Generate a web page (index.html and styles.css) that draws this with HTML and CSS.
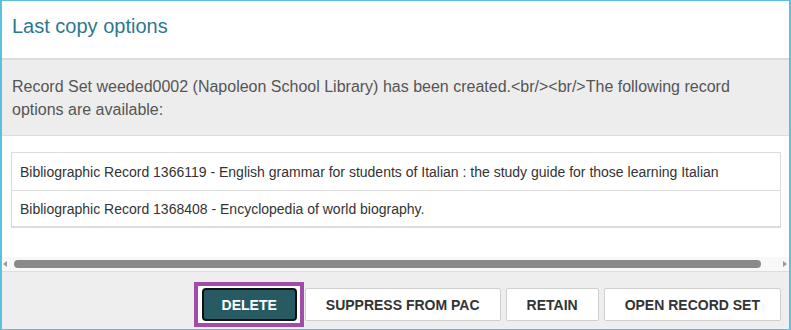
FILE: index.html
```html
<!DOCTYPE html>
<html>
<head>
<meta charset="utf-8">
<link rel="stylesheet" href="styles.css">
</head>
<body>
<div class="modal">
  <div class="modal-header">
    <h4 class="modal-title">Last copy options</h4>
  </div>
  <div class="modal-message">Record Set weeded0002 (Napoleon School Library) has been created.&lt;br/&gt;&lt;br/&gt;The following record options are available:</div>
  <div class="modal-body">
    <div class="record-list">
      <div class="record-row">Bibliographic Record 1366119 - English grammar for students of Italian : the study guide for those learning Italian</div>
      <div class="record-row">Bibliographic Record 1368408 - Encyclopedia of world biography.</div>
    </div>
  </div>
  <div class="hscroll">
    <span class="arrow arrow-left"></span>
    <div class="thumb"></div>
    <span class="arrow arrow-right"></span>
  </div>
  <div class="modal-footer">
    <span class="focus-ring"><button class="btn btn-primary">DELETE</button></span>
    <button class="btn">SUPPRESS FROM PAC</button>
    <button class="btn">RETAIN</button>
    <button class="btn">OPEN RECORD SET</button>
  </div>
</div>
</body>
</html>
```

FILE: styles.css
```css
* { box-sizing: border-box; }
html, body {
  margin: 0;
  padding: 0;
  background: #fff;
}
body {
  font-family: Arial, "Liberation Sans", sans-serif;
  width: 791px;
  height: 330px;
  overflow: hidden;
}
.modal {
  width: 791px;
  height: 330px;
  border-top: 1px solid #5bc0de;
  border-left: 2px solid #5bc0de;
  border-right: 2px solid #5bc0de;
  border-bottom: 1px solid #5bc0de;
  display: flex;
  flex-direction: column;
  background: #fff;
}
.modal-header {
  height: 59px;
  padding: 14px 10px 0;
  border-bottom: 2px solid #dcdcdc;
  flex: none;
}
.modal-title {
  margin: 0;
  font-size: 20px;
  font-weight: normal;
  line-height: 22px;
  color: #2c7a8b;
}
.modal-message {
  flex: none;
  height: 76px;
  padding: 15px 10px 0;
  background: #ededed;
  border-bottom: 1px solid #dcdcdc;
  font-size: 16px;
  line-height: 23px;
  color: #555;
}
.modal-body {
  flex: none;
  height: 121px;
  padding: 16px 8px 0 9px;
}
.record-list {
  border: 1px solid #dcdcdc;
  border-bottom-width: 2px;
}
.record-row {
  height: 37px;
  padding: 9px 8px 0;
  font-size: 14px;
  line-height: 20px;
  color: #333;
}
.record-row + .record-row {
  border-top: 1px solid #dcdcdc;
  height: 36px;
  padding-top: 8px;
}
.hscroll {
  flex: none;
  height: 15px;
  background: #f8f8f8;
  border-bottom: 1px solid #dcdcdc;
  display: flex;
  align-items: center;
  padding: 0 2px 0 1px;
}
.thumb {
  flex: 1;
  height: 8px;
  margin: 0 22px 0 7px;
  background: #8a8a8a;
  border-radius: 4px;
}
.arrow {
  width: 0;
  height: 0;
  border-top: 3.5px solid transparent;
  border-bottom: 3.5px solid transparent;
}
.arrow-left {
  border-right: 4px solid #9a9a9a;
}
.arrow-right {
  border-left: 4px solid #9a9a9a;
}
.modal-footer {
  flex: 1;
  background: #eeeeee;
  display: flex;
  justify-content: flex-end;
  align-items: flex-start;
  gap: 5px;
  padding: 10px 8px 0 0;
}
.btn {
  height: 33px;
  margin-top: 6px;
  padding: 0 20px;
  border: 1px solid #cfcfcf;
  border-radius: 2px;
  background: #fff;
  font-family: Arial, "Liberation Sans", sans-serif;
  font-size: 14px;
  font-weight: bold;
  color: #333;
  cursor: pointer;
}
.focus-ring {
  display: flex;
  border: 4px solid #a04ca8;
  background: #fff;
  padding: 2px 3px 2px 4px;
  margin-right: -4px;
}
.btn-primary {
  margin-top: 0;
  padding: 0 18px;
  background: #285a64;
  color: #fff;
  border: 2px solid #111;
  border-radius: 4px;
}
```
